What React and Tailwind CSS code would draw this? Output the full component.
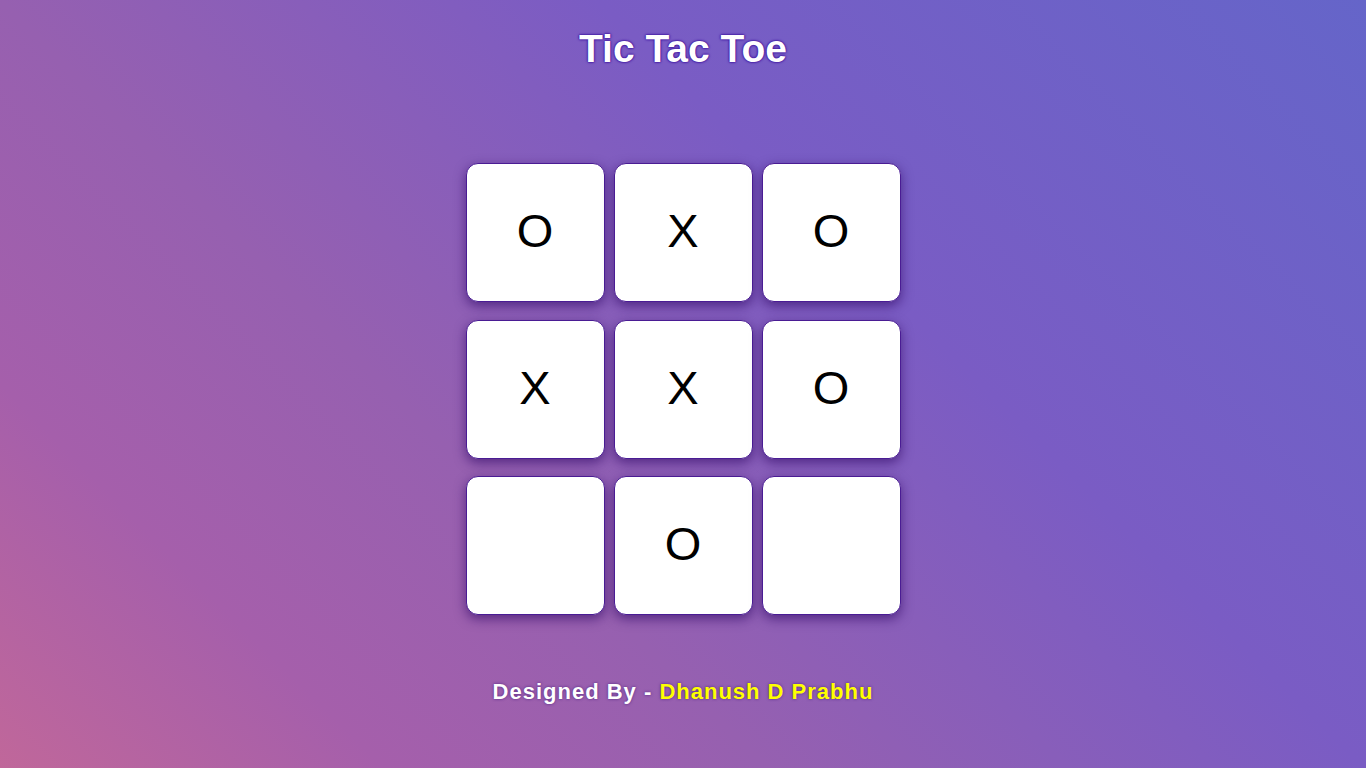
const board = ["O", "X", "O", "X", "X", "O", "", "O", ""];

const Cell = ({ value }) => (
  <div className="flex h-[139px] w-[139px] items-center justify-center rounded-[12px] border border-[#4a1c94] bg-white pb-[4px] text-[47px] leading-none text-black shadow-[0_4px_12px_rgba(50,10,105,0.65)]">
    {value}
  </div>
);

export default function App() {
  return (
    <div className="flex min-h-screen flex-col items-center bg-[linear-gradient(45deg,#c0679a_0%,#a55fab_18%,#9660b0_36%,#7a5cc4_64%,#6565c9_100%)] font-['Liberation_Sans',Arial,sans-serif]">
      <h1 className="mt-[27px] text-[39px] font-bold leading-[44px] text-white [text-shadow:0_0_3px_#3b0f9e,0_0_2px_#3b0f9e,0_0_1px_#3b0f9e]">
        Tic Tac Toe
      </h1>

      <div className="mt-[92px] grid grid-cols-[repeat(3,139px)] gap-x-[9px] gap-y-[17.5px]">
        {board.map((value, i) => (
          <Cell key={i} value={value} />
        ))}
      </div>

      <p className="mt-[63px] text-[22px] font-bold leading-[28px] tracking-[1px] text-white [text-shadow:0_0_3px_rgba(60,20,120,0.8)]">
        Designed By - <span className="text-[#ffff00]">Dhanush D Prabhu</span>
      </p>
    </div>
  );
}
